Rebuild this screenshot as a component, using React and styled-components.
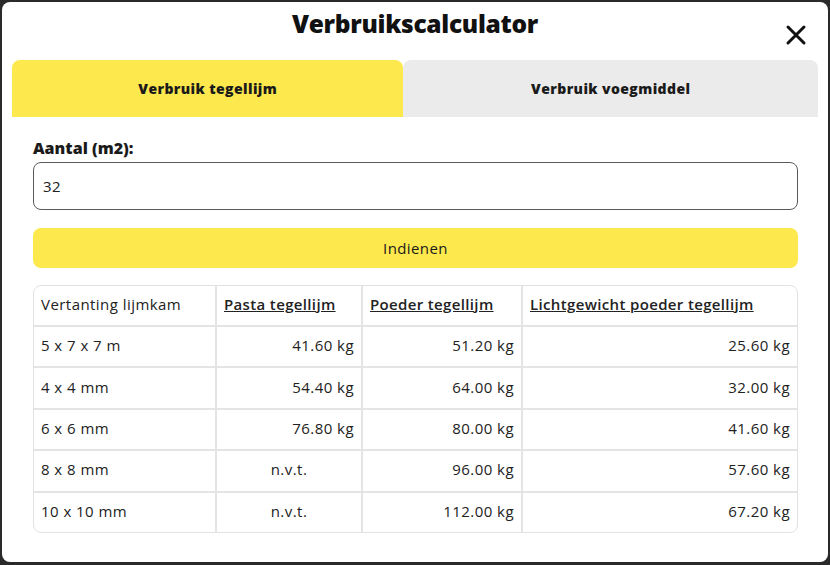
import React from "react";
import styled, { createGlobalStyle } from "styled-components";

const Global = createGlobalStyle`
  html, body { margin: 0; padding: 0; background: #2a2a2a; }
  body { font-family: "Open Sans", "Noto Sans", sans-serif; color: #1a1a1a; }
  * { box-sizing: border-box; }
`;

const Backdrop = styled.div`
  width: 830px;
  height: 565px;
  padding: 2px 2px 3px 2px;
  background: #2a2a2a;
`;

const Modal = styled.div`
  width: 100%;
  height: 100%;
  background: #fff;
  border-radius: 8px;
  padding: 0 10px;
  display: flex;
  flex-direction: column;
`;

const Header = styled.div`
  position: relative;
  height: 58px;
  display: flex;
  justify-content: center;
  align-items: flex-start;
`;

const Title = styled.h1`
  margin: 5px 0 0;
  font-size: 24.5px;
  font-weight: 800;
  letter-spacing: -0.3px;
  color: #111;
`;

const Close = styled.button`
  position: absolute;
  right: 11px;
  top: 22px;
  width: 22px;
  height: 22px;
  padding: 0;
  border: 0;
  background: none;
  cursor: pointer;
`;

const Tabs = styled.div`
  display: flex;
  height: 57px;
`;

const Tab = styled.div`
  flex: ${p => (p.$grow ? 414 : 391)} 0 0;
  display: flex;
  align-items: center;
  justify-content: center;
  border-radius: 8px 8px 0 0;
  background: ${p => (p.$active ? "#fde84d" : "#ebebeb")};
  font-size: 14px;
  font-weight: 800;
  letter-spacing: 0.4px;
  color: #1a1a1a;
`;

const Body = styled.div`
  padding: 20px 20px 0 21px;
  display: flex;
  flex-direction: column;
`;

const Label = styled.label`
  font-size: 16px;
  font-weight: 800;
  margin-bottom: 3px;
  color: #1a1a1a;
`;

const Input = styled.input`
  height: 48px;
  border: 1px solid #5a5a5a;
  border-radius: 8px;
  padding: 0 9px;
  font-family: inherit;
  font-size: 15px;
  font-weight: 500;
  letter-spacing: 0.4px;
  color: #222;
  outline: none;
`;

const Submit = styled.button`
  margin-top: 18px;
  height: 40px;
  border: 0;
  border-radius: 8px;
  background: #fde84d;
  font-family: inherit;
  font-size: 15px;
  font-weight: 500;
  letter-spacing: 0.4px;
  color: #1a1a1a;
`;

const Table = styled.div`
  margin-top: 17px;
  border: 1px solid #e2e2e2;
  border-radius: 8px;
  display: grid;
  grid-template-columns: 183px 146px 160px 1fr;
  overflow: hidden;
`;

const Cell = styled.div`
  height: ${p => (p.$head ? "39px" : "41.4px")};
  display: flex;
  align-items: center;
  justify-content: ${p => p.$align || "flex-start"};
  padding: 0 7px ${p => (p.$head ? "4px" : "3px")};
  font-size: 15px;
  color: #222;
  border-right: ${p => (p.$last ? "0" : "2px solid #e4e4e4")};
  border-top: ${p => (p.$head ? "0" : "2px solid #e4e4e4")};
  text-decoration: ${p => (p.$link ? "underline" : "none")};
  font-weight: ${p => (p.$link ? 600 : 500)};
  letter-spacing: ${p => (p.$link ? "0.35px" : "0.45px")};
`;

const rows = [
  ["5 x 7 x 7 m", "41.60 kg", "51.20 kg", "25.60 kg"],
  ["4 x 4 mm", "54.40 kg", "64.00 kg", "32.00 kg"],
  ["6 x 6 mm", "76.80 kg", "80.00 kg", "41.60 kg"],
  ["8 x 8 mm", "n.v.t.", "96.00 kg", "57.60 kg"],
  ["10 x 10 mm", "n.v.t.", "112.00 kg", "67.20 kg"],
];

export default function App() {
  return (
    <Backdrop>
      <Global />
      <Modal>
        <Header>
          <Title>Verbruikscalculator</Title>
          <Close aria-label="Sluiten">
            <svg width="22" height="22" viewBox="0 0 22 22">
              <path d="M3 3 L19 19 M19 3 L3 19" stroke="#111" strokeWidth="3" strokeLinecap="round" />
            </svg>
          </Close>
        </Header>
        <Tabs>
          <Tab $active>Verbruik tegellijm</Tab>
          <Tab $grow>Verbruik voegmiddel</Tab>
        </Tabs>
        <Body>
          <Label>Aantal (m2):</Label>
          <Input defaultValue="32" />
          <Submit>Indienen</Submit>
          <Table>
            <Cell $head>Vertanting lijmkam</Cell>
            <Cell $head $link>Pasta tegellijm</Cell>
            <Cell $head $link>Poeder tegellijm</Cell>
            <Cell $head $link $last>Lichtgewicht poeder tegellijm</Cell>
            {rows.map((r, i) => (
              <React.Fragment key={i}>
                <Cell>{r[0]}</Cell>
                <Cell $align={r[1] === "n.v.t." ? "center" : "flex-end"}>{r[1]}</Cell>
                <Cell $align="flex-end">{r[2]}</Cell>
                <Cell $align="flex-end" $last>{r[3]}</Cell>
              </React.Fragment>
            ))}
          </Table>
        </Body>
      </Modal>
    </Backdrop>
  );
}
